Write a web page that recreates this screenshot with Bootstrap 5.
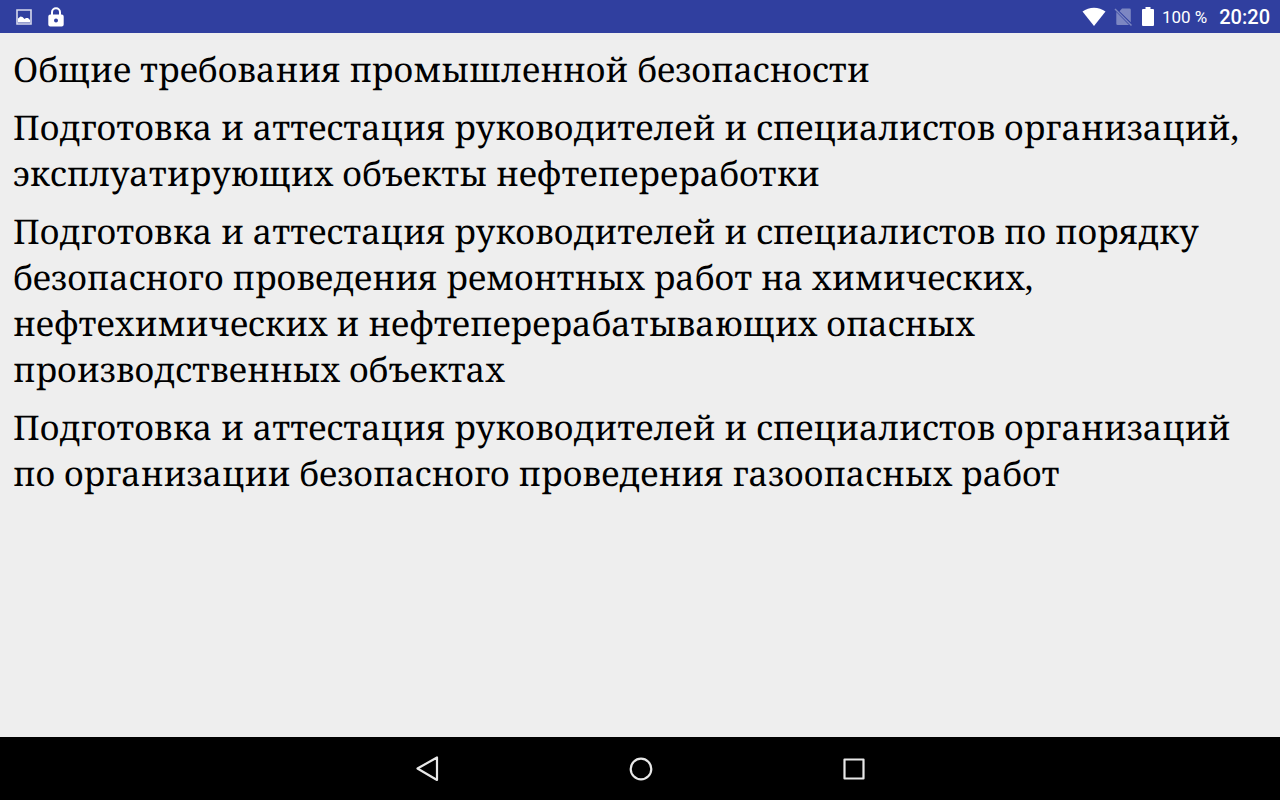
<!DOCTYPE html>
<html lang="ru">
<head>
<meta charset="utf-8">
<meta name="viewport" content="width=device-width, initial-scale=1">
<title>Промышленная безопасность</title>
<link rel="stylesheet" href="https://cdn.jsdelivr.net/npm/bootstrap@5.3.0/dist/css/bootstrap.min.css">
<style>
  body { background: #eee; font-family: Roboto, sans-serif; }
  .status-bar { height: 33px; padding: 0 10px 0 14px; background: #303f9f; color: #fff; }
  .status-bar svg, .system-nav svg { display: block; flex: none; }
  .battery-level { font-size: 17px; line-height: 20px; margin-left: 8px; }
  .clock { font-size: 20px; line-height: 20px; font-weight: 500; margin-left: 12px; }
  .topics { padding: 13px; font-family: "Noto Serif", "Liberation Serif", serif; text-rendering: geometricPrecision; }
  .topic { font-size: 34px; line-height: 46px; color: #000; text-decoration: none; margin-bottom: 12px; }
  .system-nav { height: 63px; background: #000; padding: 0 25%; }
  .system-nav button { color: #e8e8e8; }
</style>
</head>
<body class="d-flex flex-column min-vh-100">

<header class="status-bar d-flex align-items-center justify-content-between">
  <div class="d-flex align-items-center gap-2">
    <svg width="20" height="20" viewBox="0 0 20 20" role="img" aria-label="Снимок экрана">
      <path d="M3 3h14v14H3z" fill="none" stroke="#d6d9ed" stroke-width="1.6"/>
      <path d="M4 15.500v-4l2.500-2 2 .500 2 2 1.500-1h2l2 2v2.500z" fill="#fff"/>
    </svg>
    <svg class="ms-1" width="20" height="20" viewBox="0 0 20 20" role="img" aria-label="Блокировка">
      <path d="M6 8V5.300a4 4 0 0 1 8 0V8" fill="none" stroke="#fff" stroke-width="2"/>
      <path fill="#fff" fill-rule="evenodd" d="M4.300 7.500h11.400q2 0 2 2v8q0 2-2 2H4.300q-2 0-2-2v-8q0-2 2-2zM10 11.500a2 2 0 1 0 0 4 2 2 0 0 0 0-4z"/>
    </svg>
  </div>
  <div class="d-flex align-items-center">
    <svg width="24" height="20" viewBox="0 0 24 20" role="img" aria-label="Wi-Fi">
      <path fill="#fff" d="M.500 4.600C7-.500 17-.500 23.500 4.600L12 19z"/>
    </svg>
    <svg class="ms-2" width="20" height="20" viewBox="0 0 20 20" role="img" aria-label="Нет SIM-карты">
      <path fill="#7d87c2" d="M8 1.500h7.500q1.300 0 1.300 1.300v12.500L5.500 4.300zM2.300 5 15 18H3.600q-1.300 0-1.300-1.300z"/>
      <path stroke="#7d87c2" stroke-width="1.500" d="m1 2 16.500 16.500"/>
    </svg>
    <svg class="ms-2" width="12" height="20" viewBox="0 0 12 20" role="img" aria-label="Батарея">
      <path fill="#fff" d="M3.500 0h5v2H11q1 0 1 1v15q0 1-1 1H1q-1 0-1-1V3q0-1 1-1h2.500z"/>
    </svg>
    <span class="battery-level">100&nbsp;%</span>
    <time class="clock">20:20</time>
  </div>
</header>

<main class="topics flex-grow-1 d-flex flex-column">
  <a class="topic" href="#t1">Общие требования промышленной безопасности</a>
  <a class="topic" href="#t2">Подготовка и аттестация руководителей и специалистов организаций, эксплуатирующих объекты нефтепереработки</a>
  <a class="topic" href="#t3">Подготовка и аттестация руководителей и специалистов по порядку безопасного проведения ремонтных работ на химических, нефтехимических и нефтеперерабатывающих опасных производственных объектах</a>
  <a class="topic" href="#t4">Подготовка и аттестация руководителей и специалистов организаций по организации безопасного проведения газоопасных работ</a>
</main>

<nav class="system-nav d-flex" aria-label="Системная навигация">
  <button class="btn border-0 rounded-0 p-0 flex-fill d-flex align-items-center justify-content-center" type="button" aria-label="Назад">
    <svg width="28" height="28" viewBox="0 0 28 28" fill="none" stroke="currentColor" stroke-width="2.200" stroke-linejoin="round"><path d="M24 2.500v22.500L4.500 13.500z"/></svg>
  </button>
  <button class="btn border-0 rounded-0 p-0 flex-fill d-flex align-items-center justify-content-center" type="button" aria-label="Домой">
    <svg width="28" height="28" viewBox="0 0 28 28" fill="none" stroke="currentColor" stroke-width="2.200"><circle cx="15" cy="14" r="10.300"/></svg>
  </button>
  <button class="btn border-0 rounded-0 p-0 flex-fill d-flex align-items-center justify-content-center" type="button" aria-label="Недавние приложения">
    <svg width="28" height="28" viewBox="0 0 28 28" fill="none" stroke="currentColor" stroke-width="2.200" stroke-linejoin="round"><path d="M5.500 4.500h19v19h-19z"/></svg>
  </button>
</nav>

<script src="https://cdn.jsdelivr.net/npm/bootstrap@5.3.0/dist/js/bootstrap.bundle.min.js"></script>
</body>
</html>
